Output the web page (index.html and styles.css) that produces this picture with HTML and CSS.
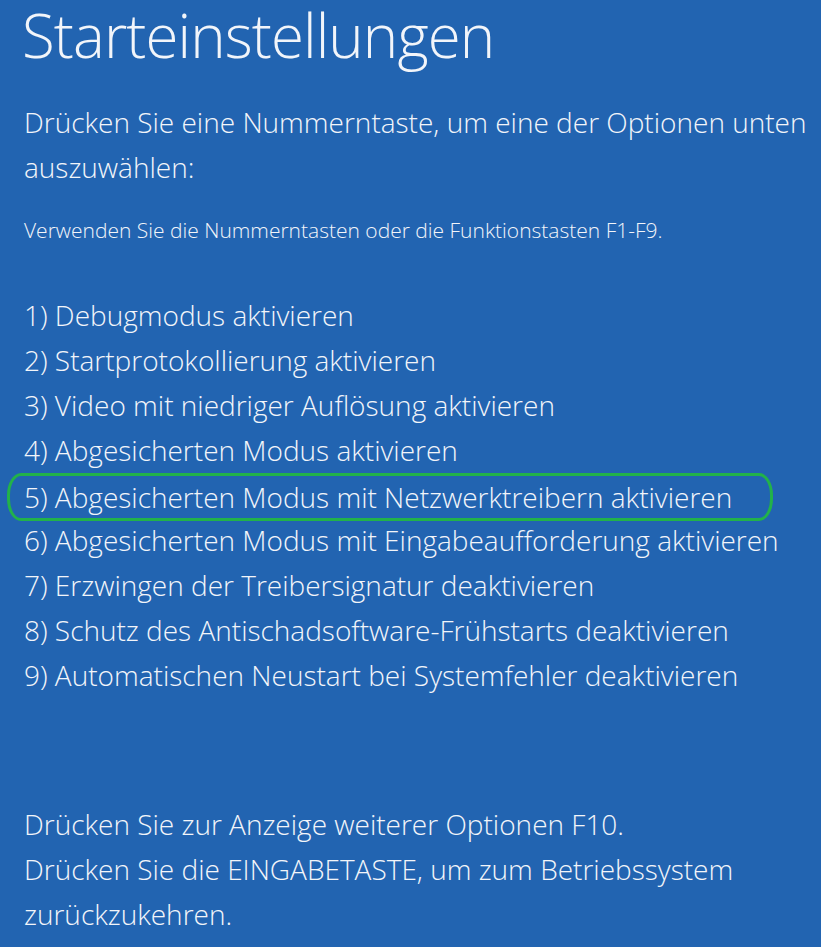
FILE: index.html
```html
<!DOCTYPE html>
<html lang="de">
<head>
<meta charset="utf-8">
<title>Starteinstellungen</title>
<link rel="stylesheet" href="styles.css">
</head>
<body>
<main class="screen">
  <h1 class="title">Starteinstellungen</h1>
  <p class="lead">Drücken Sie eine Nummerntaste, um eine der Optionen unten auszuwählen:</p>
  <p class="hint">Verwenden Sie die Nummerntasten oder die Funktionstasten F1-F9.</p>
  <ol class="options">
    <li>1) Debugmodus aktivieren</li>
    <li>2) Startprotokollierung aktivieren</li>
    <li>3) Video mit niedriger Auflösung aktivieren</li>
    <li>4) Abgesicherten Modus aktivieren</li>
    <li class="marked">5) Abgesicherten Modus mit Netzwerktreibern aktivieren</li>
    <li>6) Abgesicherten Modus mit Eingabeaufforderung aktivieren</li>
    <li>7) Erzwingen der Treibersignatur deaktivieren</li>
    <li>8) Schutz des Antischadsoftware-Frühstarts deaktivieren</li>
    <li>9) Automatischen Neustart bei Systemfehler deaktivieren</li>
  </ol>
  <div class="footer">
    <p>Drücken Sie zur Anzeige weiterer Optionen F10.</p>
    <p>Drücken Sie die EINGABETASTE, um zum Betriebssystem zurückzukehren.</p>
  </div>
</main>
</body>
</html>
```

FILE: styles.css
```css
html, body {
  margin: 0;
  padding: 0;
  background: #2264b1;
}

body {
  font-family: "Open Sans", "Noto Sans", sans-serif;
  color: #f2f5fa;
  font-weight: 300;
}

.screen {
  width: 821px;
  height: 947px;
  box-sizing: border-box;
  padding: 0 0 0 24px;
  overflow: hidden;
}

.title {
  margin: -1px 0 0 -2px;
  font-size: 60px;
  line-height: 72px;
  font-weight: 300;
  letter-spacing: -0.9px;
}

.lead {
  margin: 29px 0 0;
  width: 795px;
  font-size: 28px;
  line-height: 45px;
}

.hint {
  margin: 28px 0 0;
  font-size: 21px;
  line-height: 24px;
}

.options {
  list-style: none;
  margin: 51px 0 0;
  padding: 0;
  font-size: 28px;
  line-height: 45px;
}

.options .marked {
  margin: 0 0 -3px -17px;
  width: 766px;
  box-sizing: border-box;
  padding-left: 14px;
  border: 3px solid #22b24a;
  border-radius: 14px / 22px;
  line-height: 42px;
}

.footer {
  margin-top: 104px;
  width: 760px;
  font-size: 28px;
  line-height: 45px;
}

.footer p {
  margin: 0;
}
```
